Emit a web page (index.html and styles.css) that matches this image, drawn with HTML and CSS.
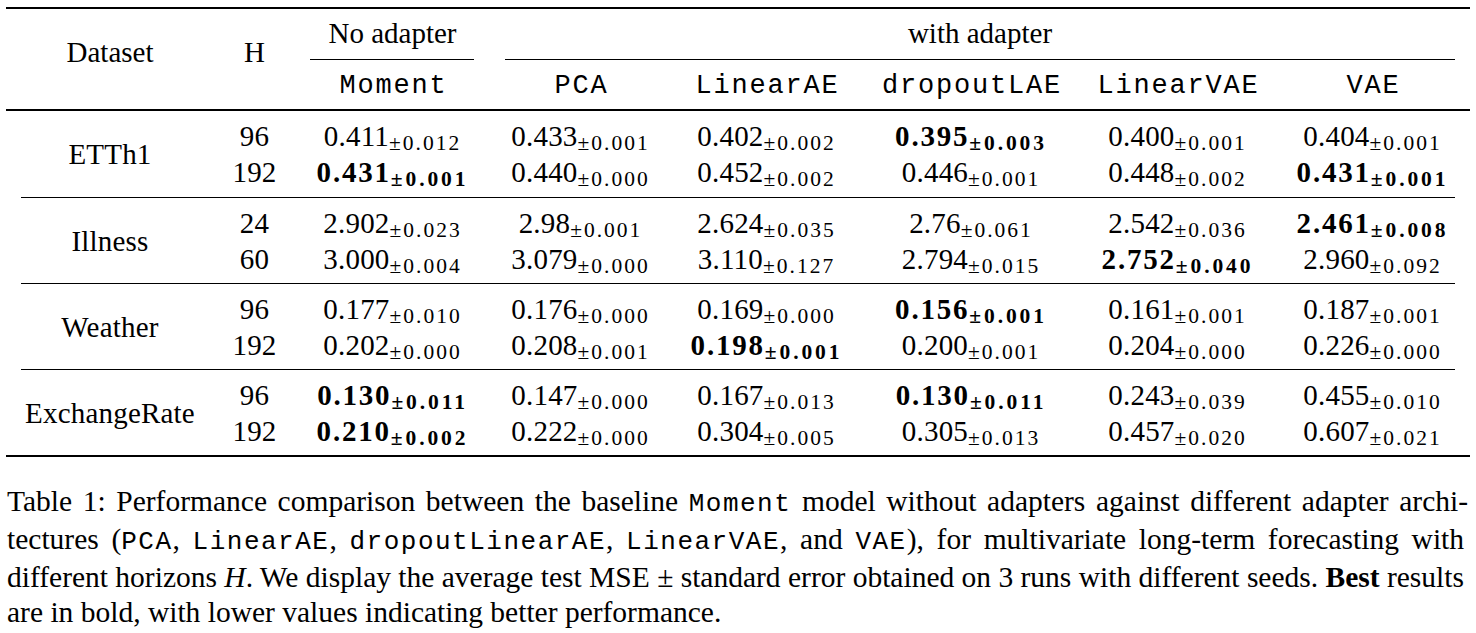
FILE: index.html
```html
<!DOCTYPE html>
<html lang="en">
<head>
<meta charset="utf-8">
<title>Table 1</title>
<link rel="stylesheet" href="styles.css">
</head>
<body>
<div class="page">
  <div class="tbl">
    <div class="rule thick top"></div>
    <div class="grid head">
      <div class="hd-ds">Dataset</div>
      <div class="hd-h">H</div>
      <div class="hd-no">No adapter</div>
      <div class="hd-with">with adapter</div>
      <div class="cmid c-no"></div>
      <div class="cmid c-with"></div>
      <div class="mono">Moment</div>
      <div class="mono">PCA</div>
      <div class="mono">LinearAE</div>
      <div class="mono">dropoutLAE</div>
      <div class="mono">LinearVAE</div>
      <div class="mono">VAE</div>
    </div>
    <div class="rule thick mid"></div>

    <div class="grid group first">
      <div class="label">ETTh1</div>
      <div>96</div>
      <div>0.411<sub>±0.012</sub></div>
      <div>0.433<sub>±0.001</sub></div>
      <div>0.402<sub>±0.002</sub></div>
      <div class="b">0.395<sub>±0.003</sub></div>
      <div>0.400<sub>±0.001</sub></div>
      <div>0.404<sub>±0.001</sub></div>
      <div>192</div>
      <div class="b">0.431<sub>±0.001</sub></div>
      <div>0.440<sub>±0.000</sub></div>
      <div>0.452<sub>±0.002</sub></div>
      <div>0.446<sub>±0.001</sub></div>
      <div>0.448<sub>±0.002</sub></div>
      <div class="b">0.431<sub>±0.001</sub></div>
    </div>
    <div class="rule thin"></div>

    <div class="grid group">
      <div class="label">Illness</div>
      <div>24</div>
      <div>2.902<sub>±0.023</sub></div>
      <div>2.98<sub>±0.001</sub></div>
      <div>2.624<sub>±0.035</sub></div>
      <div>2.76<sub>±0.061</sub></div>
      <div>2.542<sub>±0.036</sub></div>
      <div class="b">2.461<sub>±0.008</sub></div>
      <div>60</div>
      <div>3.000<sub>±0.004</sub></div>
      <div>3.079<sub>±0.000</sub></div>
      <div>3.110<sub>±0.127</sub></div>
      <div>2.794<sub>±0.015</sub></div>
      <div class="b">2.752<sub>±0.040</sub></div>
      <div>2.960<sub>±0.092</sub></div>
    </div>
    <div class="rule thin"></div>

    <div class="grid group">
      <div class="label">Weather</div>
      <div>96</div>
      <div>0.177<sub>±0.010</sub></div>
      <div>0.176<sub>±0.000</sub></div>
      <div>0.169<sub>±0.000</sub></div>
      <div class="b">0.156<sub>±0.001</sub></div>
      <div>0.161<sub>±0.001</sub></div>
      <div>0.187<sub>±0.001</sub></div>
      <div>192</div>
      <div>0.202<sub>±0.000</sub></div>
      <div>0.208<sub>±0.001</sub></div>
      <div class="b">0.198<sub>±0.001</sub></div>
      <div>0.200<sub>±0.001</sub></div>
      <div>0.204<sub>±0.000</sub></div>
      <div>0.226<sub>±0.000</sub></div>
    </div>
    <div class="rule thin"></div>

    <div class="grid group">
      <div class="label">ExchangeRate</div>
      <div>96</div>
      <div class="b">0.130<sub>±0.011</sub></div>
      <div>0.147<sub>±0.000</sub></div>
      <div>0.167<sub>±0.013</sub></div>
      <div class="b">0.130<sub>±0.011</sub></div>
      <div>0.243<sub>±0.039</sub></div>
      <div>0.455<sub>±0.010</sub></div>
      <div>192</div>
      <div class="b">0.210<sub>±0.002</sub></div>
      <div>0.222<sub>±0.000</sub></div>
      <div>0.304<sub>±0.005</sub></div>
      <div>0.305<sub>±0.013</sub></div>
      <div>0.457<sub>±0.020</sub></div>
      <div>0.607<sub>±0.021</sub></div>
    </div>
    <div class="rule thick bottom"></div>
  </div>

  <div class="caption">
    <span class="ln just l1">Table 1: Performance comparison between the baseline <code>Moment</code> model without adapters against different adapter archi-</span>
    <span class="ln just">tectures (<code>PCA</code>, <code>LinearAE</code>, <code>dropoutLinearAE</code>, <code>LinearVAE</code>, and <code>VAE</code>), for multivariate long-term forecasting with</span>
    <span class="ln just">different horizons <i>H</i>. We display the average test MSE ± standard error obtained on 3 runs with different seeds. <b>Best</b> results</span>
    <span class="ln">are in bold, with lower values indicating better performance.</span>
  </div>
</div>
</body>
</html>
```

FILE: styles.css
```css
html, body {
  margin: 0;
  padding: 0;
  background: #ffffff;
  color: #000000;
}

.page {
  padding: 7px 6px 0 6px;
  font-family: "Liberation Serif", "Times New Roman", serif;
}

.tbl {
  width: 1464px;
}

.rule {
  background: #000;
}
.rule.thick {
  height: 2px;
}
.rule.thin {
  height: 1px;
  margin: 0 15px;
}

.grid {
  display: grid;
  grid-template-columns: 208px 81px 195px 181px 191px 218px 195px 195px;
  font-size: 29px;
  line-height: 36px;
  text-align: center;
  white-space: nowrap;
}

/* header */
.head {
  grid-template-rows: 50px 1px 49px;
}
.hd-ds {
  grid-column: 1;
  grid-row: 1 / 4;
  padding-top: 25px;
}
.hd-h {
  grid-column: 2;
  grid-row: 1 / 4;
  padding-top: 25px;
}
.hd-no {
  grid-column: 3;
  grid-row: 1;
  padding-top: 6px;
}
.hd-with {
  grid-column: 4 / 9;
  grid-row: 1;
  padding-top: 6px;
}
.cmid {
  grid-row: 2;
  background: #000;
}
.c-no {
  grid-column: 3;
  margin: 0 16px 0 15px;
}
.c-with {
  grid-column: 4 / 9;
  margin: 0 15px 0 15px;
}
.mono {
  grid-row: 3;
  font-family: "Liberation Mono", "Courier New", monospace;
  font-size: 27px;
  letter-spacing: 1.8px;
  padding-top: 8px;
  padding-left: 2px;
}

/* data groups */
.group {
  grid-template-rows: 36px 36px;
  padding: 7px 0 6px 0;
}
.group.first {
  padding-bottom: 7px;
}
.label {
  grid-column: 1;
  grid-row: 1 / 3;
  align-self: center;
}

.group > div {
  letter-spacing: 0.2px;
}

sub {
  font-size: 21.5px;
  line-height: 0;
  vertical-align: -4px;
  letter-spacing: 2px;
}

.group > .b {
  font-weight: bold;
  letter-spacing: 1.8px;
}
.b sub {
  letter-spacing: 2.9px;
}

/* caption */
.caption {
  margin-top: 27px;
  width: 1457px;
  padding-left: 1px;
  font-size: 29.5px;
  line-height: 35px;
}
.ln {
  display: block;
}
.ln.just {
  text-align: justify;
  text-align-last: justify;
  word-spacing: -3.5px;
}
.ln.l1 {
  width: 1461px;
}
code {
  font-family: "Liberation Mono", "Courier New", monospace;
  font-size: 26px;
  letter-spacing: 1.5px;
}
```
